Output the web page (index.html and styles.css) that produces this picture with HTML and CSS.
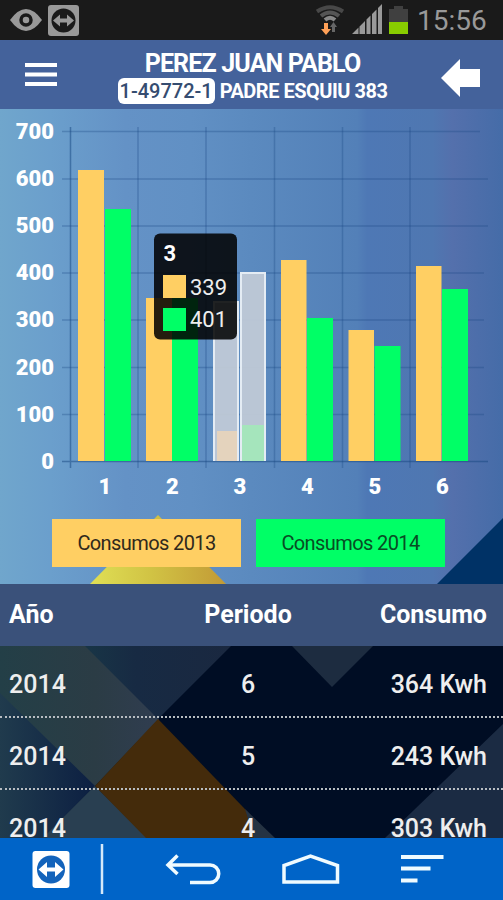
FILE: index.html
```html
<!DOCTYPE html>
<html lang="es">
<head>
    <meta charset="UTF-8">
    <meta name="viewport" content="width=device-width, initial-scale=1.0">
    <title>Consumos</title>
    <link rel="stylesheet" href="styles.css">
</head>
<body>
    <div class="status-bar">
        <svg class="eye-icon" width="32" height="32" viewBox="0 0 32 32">
            <path d="M0 16Q8 5 16 5T32 16Q24 27 16 27T0 16Z" fill="#999"/>
            <circle cx="16" cy="16" r="5" fill="none" stroke="#1a1a1a" stroke-width="3.500"/>
        </svg>
        <svg class="remote-icon" width="32" height="32" viewBox="0 0 32 32">
            <rect y="1" width="31" height="31" rx="3" fill="#999"/>
            <circle cx="15.500" cy="16.500" r="12" fill="#1a1a1a"/>
            <path d="M5 16.500L12 10.500V14.500H19V10.500L26 16.500L19 22.500V18.500H12V22.500Z" fill="#999"/>
        </svg>
        <svg class="status-right" width="92" height="32" viewBox="0 0 92 32">
            <g fill="none" stroke-width="4">
                <path d="M1 7.500Q14 -1 27 7.500" stroke="#484848"/>
                <path d="M5 12Q14 5 23 12" stroke="#555"/>
                <path d="M9 16Q14 11.500 19 16" stroke="#888"/>
            </g>
            <path d="M8 19H12V25H15L10 31L5 25H8Z" fill="#ffa057"/>
            <path d="M16 28V23H14L17.500 18L21 23H19V28Z" fill="#666"/>
            <path d="M36 30L42.500 23.500V30ZM43.500 22.500L49 17V30H43.500ZM50.500 15.500L54.500 11.500V30H50.500ZM56 10L60.500 5.500V30H56ZM62 4L66 0V30H62Z" fill="#999"/>
            <path d="M73 18V5H78V2H87V5H92V18Z" fill="#404040"/>
            <rect x="73" y="18" width="19" height="12" fill="#88cc00"/>
        </svg>
        <span class="clock">15:56</span>
    </div>

    <div class="header">
        <svg class="menu-icon" width="32" height="24" viewBox="0 0 32 24">
            <path d="M0 2H32M0 11.500H32M0 21H32" stroke="#fff" stroke-width="4"/>
        </svg>
        <div class="account">
            <div class="name">PEREZ JUAN PABLO</div>
            <div class="address"><span class="badge">1-49772-1</span><span class="street">PADRE ESQUIU 383</span></div>
        </div>
        <svg class="back-icon" width="39" height="38" viewBox="0 0 39 38">
            <path d="M0 19L19 0V10H39V28H19V38Z" fill="#fff"/>
        </svg>
    </div>

    <div class="chart-panel">
        <svg class="chart" width="503" height="475" viewBox="0 109 503 475">
            <defs>
                <linearGradient id="sky">
                    <stop offset="0" stop-color="#70a6cc"/>
                    <stop offset=".1" stop-color="#6b9fcc"/>
                    <stop offset=".25" stop-color="#6492c6"/>
                    <stop offset=".38" stop-color="#6190c4"/>
                    <stop offset=".5" stop-color="#5b8abf"/>
                    <stop offset=".71" stop-color="#5380b8"/>
                    <stop offset=".73" stop-color="#4e78b5"/>
                    <stop offset=".86" stop-color="#4f77b1"/>
                    <stop offset=".9" stop-color="#5470ac"/>
                    <stop offset="1" stop-color="#456ca8"/>
                </linearGradient>
                <linearGradient id="gold">
                    <stop offset="0" stop-color="#dfdf55"/>
                    <stop offset=".45" stop-color="#d1c344"/>
                    <stop offset="1" stop-color="#c29a36"/>
                </linearGradient>
            </defs>
            <rect y="109" width="503" height="475" fill="url(#sky)"/>
            <path d="M158 515L226 584H90Z" fill="url(#gold)"/>
            <path d="M503 518V584H437Z" fill="#003266"/>
            <g stroke="#164580" stroke-opacity=".3" stroke-width="1.500">
                <path d="M62 131.500H480M62 179H488M62 226H488M62 273H484M62 320H484M62 367.500H484M62 414.500H484"/>
                <path d="M138 127V468M206 127V468M274.500 127V468M342.500 127V468M410 127V468"/>
            </g>
            <path d="M62 461.500H488M70.500 127V468" stroke="#164580" stroke-opacity=".5" stroke-width="1.500"/>
            <g fill="#ffcf63">
                <path d="M78 170H104V461H78ZM146 298H172V461H146ZM281 260H306.500V461H281ZM348.500 330H374V461H348.500ZM416 266H441.500V461H416Z"/>
            </g>
            <g fill="#00ff66">
                <path d="M105 209H131V461H105ZM172 298H198V461H172ZM307 318H333V461H307ZM374.500 346H400.500V461H374.500ZM442 289H468V461H442Z"/>
            </g>
            <g fill="#c0cad7" fill-opacity=".94" stroke="#e4ecf4" stroke-width="2">
                <path d="M214 461V302H238V461M241 461V273H265V461"/>
            </g>
            <path d="M217 431H237V461H217Z" fill="#e4d3bd"/>
            <path d="M242 425H264V461H242Z" fill="#a5e5bc"/>
            <g class="axis" text-anchor="end">
                <text x="54" y="139">700</text>
                <text x="54" y="186">600</text>
                <text x="54" y="233">500</text>
                <text x="54" y="280">400</text>
                <text x="54" y="327">300</text>
                <text x="54" y="375">200</text>
                <text x="54" y="422">100</text>
                <text x="54" y="469">0</text>
            </g>
            <g class="axis" text-anchor="middle">
                <text x="105" y="494">1</text>
                <text x="172.500" y="494">2</text>
                <text x="240" y="494">3</text>
                <text x="307.500" y="494">4</text>
                <text x="375" y="494">5</text>
                <text x="442.500" y="494">6</text>
            </g>
            <rect x="154" y="233.500" width="83" height="106" rx="6" fill="#000" fill-opacity=".86"/>
            <text class="tip-title" x="163.500" y="261">3</text>
            <rect x="163" y="275" width="23" height="23" fill="#ffcf63"/>
            <rect x="163" y="308" width="23" height="23" fill="#00ff66"/>
            <g class="tip-value">
                <text x="190" y="295">339</text>
                <text x="190" y="327">401</text>
            </g>
        </svg>
        <div class="legend">
            <div class="legend-item orange">Consumos 2013</div>
            <div class="legend-item green">Consumos 2014</div>
        </div>
    </div>

    <div class="table">
        <svg class="table-bg" width="503" height="192" viewBox="0 646 503 192">
            <defs>
                <linearGradient id="slate" gradientUnits="userSpaceOnUse" x1="0" y1="0" x2="158" y2="0">
                    <stop offset="0" stop-color="#233f47"/>
                    <stop offset=".6" stop-color="#2b3c45"/>
                    <stop offset="1" stop-color="#303d50"/>
                </linearGradient>
                <linearGradient id="navy">
                    <stop offset="0" stop-color="#203b4d"/>
                    <stop offset="1" stop-color="#0c1f42"/>
                </linearGradient>
                <linearGradient id="dusk">
                    <stop offset="0" stop-color="#183546"/>
                    <stop offset=".35" stop-color="#172a43"/>
                    <stop offset="1" stop-color="#1a2840"/>
                </linearGradient>
            </defs>
            <rect y="646" width="503" height="192" fill="#000d24"/>
            <path d="M0 646H86L159 719L95 786L60 838H0Z" fill="url(#slate)"/>
            <path d="M85 646H231L158 719Z" fill="url(#dusk)"/>
            <path d="M0 693L95 786L43 838H0Z" fill="url(#navy)"/>
            <path d="M95 786L43 838H148Z" fill="#293f51"/>
            <path d="M158 719L273 838H146L95 786Z" fill="#442b0b"/>
            <path d="M245 809L275 838H254Z" fill="#253343"/>
            <path d="M292 646H373L332 687Z" fill="#1d2c40"/>
            <path d="M503 724V838H385Z" fill="#1b2b43"/>
        </svg>
        <div class="row table-head"><span>Año</span><span>Periodo</span><span>Consumo</span></div>
        <div class="row"><span>2014</span><span>6</span><span>364 Kwh</span></div>
        <div class="row"><span>2014</span><span>5</span><span>243 Kwh</span></div>
        <div class="row"><span>2014</span><span>4</span><span>303 Kwh</span></div>
    </div>

    <div class="nav-bar">
        <svg width="503" height="62" viewBox="0 838 503 62">
            <rect x="32.500" y="851" width="37" height="37" rx="3" fill="#fff"/>
            <circle cx="51" cy="869.500" r="14" fill="#1363bb"/>
            <path d="M38.500 869.500L47 862V867.500H55V862L63.500 869.500L55 877V871.500H47V877Z" fill="#fff"/>
            <path d="M102 844V894" stroke="#d5e9fa" stroke-width="2.500"/>
            <g fill="none" stroke="#f0fbff" stroke-width="3.500">
                <path d="M168 865H210A8.500 8.500 0 0 1 210 882.500H190M177.500 855.500L168 865L177.500 874"/>
                <path d="M284 882V865.500L310.500 856L337.500 865.500V882Z"/>
                <path d="M401 857H443.500M401 868.500H430.500M401 880.500H417.500" stroke-width="4"/>
            </g>
        </svg>
    </div>
</body>
</html>
```
FILE: styles.css
```css
body {
    margin: 0;
    width: 503px;
    height: 900px;
    overflow: hidden;
    display: flex;
    flex-direction: column;
    font-family: Roboto, "Liberation Sans", sans-serif;
    color: #fff;
    background-color: #000d24;
}

svg {
    display: block;
    flex-shrink: 0;
}

.status-bar {
    display: flex;
    height: 40px;
    box-sizing: border-box;
    padding: 4px 16px 0 10px;
    background-color: #1a1a1a;
}

.remote-icon {
    margin-left: 6px;
}

.status-right {
    margin-left: auto;
}

.clock {
    width: 70px;
    margin-left: 9px;
    font-size: 28px;
    line-height: 33px;
    color: #999;
    white-space: nowrap;
}

.header {
    display: flex;
    justify-content: space-between;
    height: 69px;
    box-sizing: border-box;
    padding: 0 23px 0 25px;
    background-color: #44629b;
}

.menu-icon {
    margin-top: 23px;
}

.back-icon {
    margin-top: 19px;
}

.account {
    display: flex;
    flex-direction: column;
    align-items: center;
    padding: 9px 0 0 7px;
    font-weight: bold;
    white-space: nowrap;
}

.name {
    font-size: 25px;
    line-height: 29px;
    letter-spacing: -0.85px;
}

.address {
    display: flex;
    align-items: center;
    gap: 5px;
    font-size: 20px;
}

.street {
    letter-spacing: -0.5px;
}

.badge {
    background-color: #fff;
    color: #354c70;
    border-radius: 6px;
    height: 26px;
    line-height: 27px;
    width: 97px;
    text-align: center;
    font-weight: 500;
}

.chart-panel {
    display: grid;
    height: 475px;
}

.chart,
.legend {
    grid-area: 1 / 1;
}

.axis {
    font-size: 22px;
    font-weight: 900;
    fill: #fff;
}

.tip-title {
    font-size: 22px;
    font-weight: bold;
    fill: #fff;
}

.tip-value {
    font-size: 22px;
    fill: #eee;
}

.legend {
    display: flex;
    align-self: end;
    gap: 15px;
    padding: 0 0 17px 52px;
    z-index: 1;
}

.legend-item {
    width: 189px;
    height: 48px;
    line-height: 48px;
    text-align: center;
    font-size: 20px;
    letter-spacing: -0.6px;
    color: #30291c;
}

.orange {
    background-color: #ffcf63;
}

.green {
    background-color: #00ff66;
    color: #084d24;
}

.table {
    display: grid;
    grid-template-rows: 62px 72px 72px 48px;
    height: 254px;
    overflow: hidden;
}

.table-bg {
    grid-area: 2 / 1 / 5 / 2;
}

.row {
    grid-column: 1;
    display: grid;
    grid-template-columns: 1fr 1fr 1fr;
    height: 72px;
    box-sizing: border-box;
    padding: 0 16px 0 9px;
    border-bottom: 2px dotted #b8bdc2;
    line-height: 78px;
    font-size: 25px;
    font-weight: 500;
    color: #eee;
    z-index: 1;
}

.row:nth-child(3) {
    grid-row: 2;
}

.row:nth-child(4) {
    grid-row: 3;
}

.row:nth-child(5) {
    grid-row: 4;
}

.row span:nth-child(2) {
    text-align: center;
}

.row span:nth-child(3) {
    text-align: right;
}

.table-head {
    grid-row: 1;
    height: 62px;
    border: none;
    line-height: 61px;
    font-weight: bold;
    color: #fff;
    background-color: #3a517a;
}

.nav-bar {
    height: 62px;
    background-color: #0064c8;
}
```
